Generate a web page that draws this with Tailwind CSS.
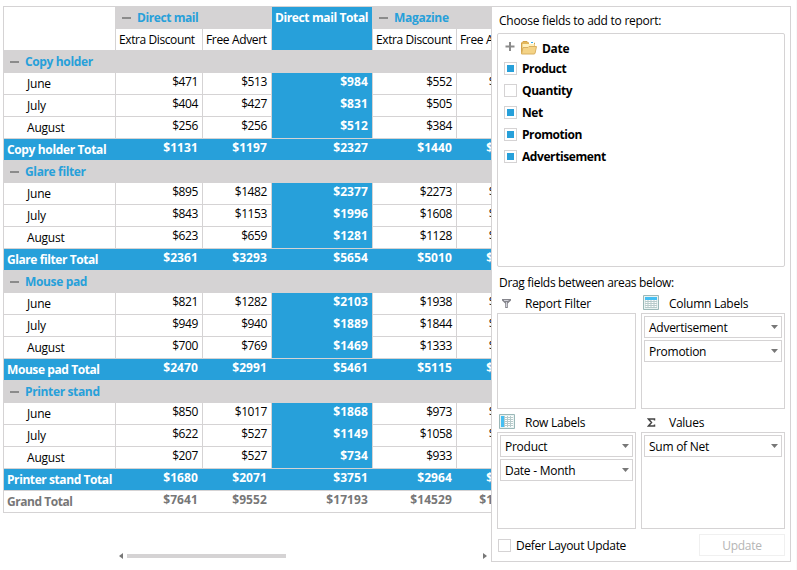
<!DOCTYPE html>
<html lang="en"><head><meta charset="utf-8"><title>Pivot report</title>
<script src="https://cdn.jsdelivr.net/npm/@tailwindcss/browser@4"></script></head>
<body class="bg-white">
<div class="flex h-[570px] w-[797px] overflow-hidden border-r border-[#f8f8f8] bg-white pl-[3px] pt-[6px] font-['Open_Sans','Noto_Sans',sans-serif] text-[12px] leading-[22px] text-black">
  <main class="flex w-[488px] shrink-0 flex-col overflow-hidden whitespace-nowrap">
    <div id="grid" class="w-[560px] border-l border-t border-[#d5d3d4]">
      <div class="flex h-[44px] bg-[#d5d3d4]">
        <div class="mb-px w-[111px] bg-white"></div>
        <div class="ml-px flex w-[155px] flex-col">
          <div class="flex h-[22px] items-center pl-[6px]"><i class="h-[2px] w-[9px] bg-[#8b8b8b]"></i><b class="ml-[6px] tracking-[-0.42px] text-[#27a0da]">Direct mail</b></div>
          <div class="flex h-[21px] gap-px"><span class="w-[86px] bg-white pl-[3px] tracking-[-0.4px]">Extra Discount</span><span class="w-[68px] bg-white pl-[3px] tracking-[-0.35px]">Free Advert</span></div>
        </div>
        <div class="mb-px ml-px w-[100px] bg-[#27a0da] pl-[3px] font-bold tracking-[-0.38px] text-white">Direct mail Total</div>
        <div class="ml-px flex w-[187px] flex-col">
          <div class="flex h-[22px] items-center pl-[6px]"><i class="h-[2px] w-[9px] bg-[#8b8b8b]"></i><b class="ml-[6px] tracking-[-0.29px] text-[#27a0da]">Magazine</b></div>
          <div class="flex h-[21px] gap-px"><span class="w-[83px] bg-white pl-[3px] tracking-[-0.4px]">Extra Discount</span><span class="w-[68px] bg-white pl-[3px] tracking-[-0.35px]">Free Advert</span></div>
        </div>
      </div>
    </div>
    <div class="mt-[40px] flex h-[5px] items-center pl-[116px]">
      <svg class="h-[6px] w-[4px] shrink-0" viewBox="0 0 4 6"><path d="M4 0v6L0 3z" fill="#777"/></svg>
      <i class="ml-[4px] h-[4px] w-[159px] bg-[#d5d3d4]"></i>
      <svg class="ml-[197px] h-[6px] w-[4px] shrink-0" viewBox="0 0 4 6"><path d="M0 0v6l4-3z" fill="#777"/></svg>
    </div>
  </main>
  <aside class="flex h-[556px] w-[300px] shrink-0 flex-col border border-[#d5d3d4] bg-white pl-[5px] pr-[5px] tracking-[-0.26px]">
    <div class="h-[26px] shrink-0 pl-[2px] pt-[3px]">Choose fields to add to report:</div>
    <div class="h-[234px] w-[288px] shrink-0 rounded-[2px] border border-[#d5d3d4] pl-[6px] pt-[4px] font-bold tracking-[-0.42px]">
      <div class="flex h-[19px] items-center">
        <svg class="mb-[3px] ml-[1px] h-[9px] w-[10px]" viewBox="0 0 10 9"><path d="M.5 4.500h9M5 0v9" stroke="#8b8b8b" stroke-width="2"/></svg>
        <svg class="ml-[6px] h-[14px] w-[16px]" viewBox="0 0 16 14"><path d="M.5 12.500V2L2 .5h4L7.500 2h6v4" fill="#e3b85c" stroke="#d3a349"/><path d="M8 1h5v2H8z" fill="#fff"/><path d="M10 1h2v1h-2z" fill="#35a9e5"/><path d="M1.500 3h12v4h-12z" fill="#fff0bd"/><path d="M.5 13 2 6.500h5l1-1h7.500L14 12.500l-1 .5z" fill="#f4d386" stroke="#d9b061"/></svg>
        <span class="ml-[5px] pt-[3px] tracking-[-0.3px]">Date</span>
      </div>
      <div id="fields" class="flex flex-col"></div>
    </div>
    <div class="h-[24px] shrink-0 pl-[2px] pt-[5px] tracking-[-0.32px]">Drag fields between areas below:</div>
    <div class="grid shrink-0 grid-cols-[139px_144px] gap-x-[5px]">
      <section>
        <div class="flex h-[22px] items-center pl-[5px] pt-[2px]"><svg class="h-[9px] w-[9px]" viewBox="0 0 9 9"><path d="M0 0h9v1.500L5.800 4.500V9H3.200V4.500L0 1.500z" fill="#85858c"/><path d="M2 1.500h4.500M4.500 3v5" fill="none" stroke="#d0d0d8"/></svg><span class="ml-[14px] pt-[1px]">Report Filter</span></div>
        <div class="h-[96px] border border-[#d5d3d4]"></div>
      </section>
      <section>
        <div class="flex h-[22px] items-center pl-[2px] pt-[1px]"><svg class="h-[15px] w-[16px]" viewBox="0 0 16 15"><path d="M.5.5h15v14H.5z" fill="#e8f3f2" stroke="#9bb8b8"/><path d="M2 2h12v3H2z" fill="#45bff3"/><path d="M2 5h12v8H2z" fill="#b7cbcb"/><path d="M2.500 5.500h2m1 0h2m1 0h2m1 0h2m-11 2h2m1 0h2m1 0h2m1 0h2m-11 2h2m1 0h2m1 0h2m1 0h2m-11 2h2m1 0h2m1 0h2m1 0h2" stroke="#fff"/></svg><span class="ml-[10px] pt-[2px]">Column Labels</span></div>
        <div class="flex h-[96px] flex-col gap-[2px] border border-[#d5d3d4] p-[2px]" data-items="Advertisement,Promotion"></div>
      </section>
      <section>
        <div class="flex h-[23px] items-center pl-[2px] pt-[2px]"><svg class="h-[15px] w-[16px]" viewBox="0 0 16 15"><path d="M.5.5h15v14H.5z" fill="#e8f3f2" stroke="#9bb8b8"/><path d="M2 2h3v11H2z" fill="#45bff3"/><path d="M5 2h9v11H5z" fill="#b7cbcb"/><path d="M6 2.500h2m1 0h2m1 0h2m-8 2h2m1 0h2m1 0h2m-8 2h2m1 0h2m1 0h2m-8 2h2m1 0h2m1 0h2m-8 2h2m1 0h2m1 0h2m-8 2h2m1 0h2m1 0h2" stroke="#fff"/></svg><span class="ml-[10px] pt-[3px]">Row Labels</span></div>
        <div class="flex h-[97px] flex-col gap-[2px] border border-[#d5d3d4] p-[2px]" data-items="Product,Date - Month"></div>
      </section>
      <section>
        <div class="flex h-[23px] items-center pl-[6px] pt-[3px]"><svg class="h-[9px] w-[9px]" viewBox="0 0 9 9"><path d="M7.500 2.500V1H1.500l3 3.500-3 3.500h6V6.500" fill="none" stroke="#444" stroke-width="1.500"/></svg><span class="ml-[13px] pt-[1px]">Values</span></div>
        <div class="flex h-[97px] flex-col gap-[2px] border border-[#d5d3d4] p-[2px]" data-items="Sum of Net"></div>
      </section>
    </div>
    <div class="flex h-[32px] w-[288px] shrink-0 items-center pl-px">
      <i class="h-[13px] w-[13px] border border-[#d5d3d4]"></i><span class="ml-[5px] pt-[2px] tracking-[-0.33px]">Defer Layout Update</span>
      <span class="ml-auto h-[22px] w-[86px] border border-[#f0f0f0] text-center text-[#b5b5b5]">Update</span>
    </div>
  </aside>
</div>
<script>
const months = ['June', 'July', 'August'];
const groups = [
  ['Copy holder', [[471,513,984,552,1028],[404,427,831,505,735],[256,256,512,384,640],[1131,1197,2327,1440,2403]]],
  ['Glare filter', [[895,1482,2377,2273,1834],[843,1153,1996,1608,1256],[623,659,1281,1128,1045],[2361,3293,5654,5010,4135]]],
  ['Mouse pad', [[821,1282,2103,1938,1654],[949,940,1889,1844,1450],[700,769,1469,1333,1120],[2470,2991,5461,5115,4224]]],
  ['Printer stand', [[850,1017,1868,973,1245],[622,527,1149,1058,1120],[207,527,734,933,760],[1680,2071,3751,2964,3125]]]
];
const widths = ['w-[87px]', 'w-[69px]', 'w-[101px]', 'w-[84px]', 'w-[69px]'];
const cell = (v, i, last) => `<span class="${widths[i]} h-[22px] border-r border-[#d5d3d4] pr-[4px] text-right leading-[18px] ${i === 2 ? 'bg-[#27a0da] font-bold text-white tracking-[0.1px]' : 'tracking-[-0.4px]'} ${i !== 2 || last ? 'border-b' : ''}">$${v}</span>`;
const plain = (v, i) => `<span class="${widths[i]} pr-[5px] text-right leading-[18px] tracking-[0.1px]">$${v}</span>`;
let html = '';
for (const [name, rows] of groups) {
  html += `<div class="flex h-[22px] items-center bg-[#d5d3d4] pl-[6px]"><i class="h-[2px] w-[9px] bg-[#8b8b8b]"></i><b class="ml-[6px] tracking-[-0.36px] text-[#27a0da]">${name}</b></div>`;
  months.forEach((m, r) => html += `<div class="flex h-[22px]"><span class="h-[22px] w-[112px] border-b border-r border-[#d5d3d4] pl-[23px] tracking-[-0.2px]">${m}</span>${rows[r].map((v, i) => cell(v, i, r === 2)).join('')}</div>`);
  html += `<div class="flex h-[22px] border-b border-[#d5d3d4] bg-[#27a0da] font-bold text-white"><span class="w-[112px] pl-[3px] ${name === 'Copy holder' ? 'tracking-[-0.36px]' : 'tracking-[-0.42px]'}">${name} Total</span>${rows[3].map(plain).join('')}</div>`;
}
html += `<div class="flex h-[22px] border-b border-[#d5d3d4] font-bold text-[#777]"><span class="w-[112px] pl-[3px] tracking-[-0.45px]">Grand Total</span>${[7641,9552,17193,14529,13887].map(plain).join('')}</div>`;
document.getElementById('grid').insertAdjacentHTML('beforeend', html);
document.getElementById('fields').innerHTML = [['Product',1],['Quantity',0],['Net',1],['Promotion',1],['Advertisement',1]].map(([n, on]) =>
  `<div class="flex h-[22px] items-center pt-px"><i class="flex h-[13px] w-[13px] items-center justify-center border border-[#d5d3d4]">${on ? '<i class="h-[7px] w-[7px] bg-[#27a0da]"></i>' : ''}</i><span class="ml-[5px] pt-px">${n}</span></div>`).join('');
document.querySelectorAll('[data-items]').forEach(el => el.innerHTML = el.dataset.items.split(',').map(n =>
  `<div class="flex h-[22px] items-center justify-between border border-[#d5d3d4] pl-[4px] pr-[3px]"><span class="pt-[2px]">${n}</span><svg class="h-[4px] w-[7px]" viewBox="0 0 7 4"><path d="M0 0h7L3.500 4z" fill="#777"/></svg></div>`).join(''));
</script>
</body></html>
